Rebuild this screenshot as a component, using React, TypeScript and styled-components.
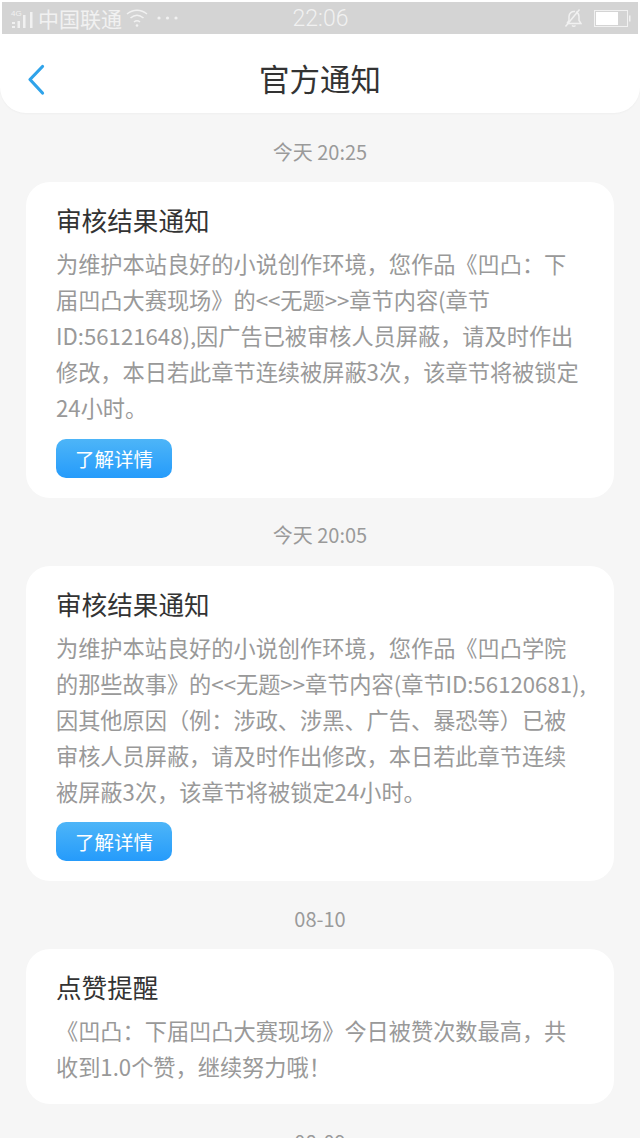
import { FC } from 'react'
import styled, { createGlobalStyle } from 'styled-components'

const GlobalStyle = createGlobalStyle`
  html, body {
    margin: 0;
    padding: 0;
    background-color: #f6f6f6;
  }
  body {
    font-family: "Noto Sans CJK SC", "Noto Sans", sans-serif;
  }
`

const Page = styled.div`
  width: 640px;
  height: 1138px;
  overflow: hidden;
  background-color: #f6f6f6;
`

const Header = styled.header`
  background-color: #ffffff;
  border-radius: 0 0 26px 26px;
  padding: 2px 2px 0;
  height: 113px;
  box-sizing: border-box;
  box-shadow: 0 1px 2px rgba(0, 0, 0, 0.03);
`

const StatusBar = styled.div`
  height: 32px;
  background-color: #d4d4d4;
  display: flex;
  align-items: center;
  color: #f1f1f1;
`

const StatusLeft = styled.div`
  display: flex;
  align-items: center;
  padding-left: 8px;
  flex: 1;
`

const Carrier = styled.span`
  font-size: 21px;
  line-height: 31px;
  margin-left: 2px;
  margin-right: 4px;
`

const DotsSlot = styled.span`
  display: flex;
  margin-left: 9px;
`

const StatusTime = styled.span`
  font-family: "Roboto", sans-serif;
  font-size: 23px;
  line-height: 31px;
  font-weight: 300;
  width: 60px;
  text-align: center;
`

const StatusRight = styled.div`
  flex: 1;
  display: flex;
  justify-content: flex-end;
  align-items: center;
  gap: 12px;
  padding-right: 7px;
`

const NavBar = styled.div`
  height: 79px;
  padding-top: 8px;
  box-sizing: border-box;
  display: flex;
  align-items: center;
  position: relative;
  justify-content: center;
`

const BackButton = styled.span`
  position: absolute;
  left: 22px;
  top: 30px;
  display: flex;
`

const NavTitle = styled.h1`
  margin: 0;
  font-size: 30.500px;
  font-weight: 400;
  color: #333333;
  line-height: 40px;
`

const Feed = styled.main`
  padding: 1px 26px 0;
`

const TimeLabel = styled.div`
  height: 68px;
  padding-top: 6px;
  box-sizing: border-box;
  display: flex;
  align-items: center;
  justify-content: center;
  font-size: 20px;
  color: #9a9a9a;
`

const Card = styled.article`
  background-color: #ffffff;
  border-radius: 24px;
  padding: 19px 30px 20px;
`

const CardTitle = styled.h2`
  margin: 0 0 6px;
  font-size: 25.600px;
  font-weight: 400;
  line-height: 38px;
  color: #333333;
`

const Body = styled.p`
  margin: 0;
  font-size: 22.200px;
  line-height: 36px;
  color: #999999;
`

const Line = styled.span`
  display: block;
  white-space: nowrap;
`

const DetailButton = styled.button`
  display: block;
  width: 116px;
  height: 39px;
  margin-top: 13.500px;
  padding: 0;
  border: none;
  border-radius: 10px;
  background: linear-gradient(#4db5f8, #259bfb);
  color: #ffffff;
  font-family: inherit;
  font-size: 19.500px;
  line-height: 39px;
`

type Notice = {
  time: string
  title: string
  lines: string[]
  action?: boolean
}

const notices: Notice[] = [
  {
    time: '今天 20:25',
    title: '审核结果通知',
    lines: [
      '为维护本站良好的小说创作环境，您作品《凹凸：下',
      '届凹凸大赛现场》的<<无题>>章节内容(章节',
      'ID:56121648),因广告已被审核人员屏蔽，请及时作出',
      '修改，本日若此章节连续被屏蔽3次，该章节将被锁定',
      '24小时。',
    ],
    action: true,
  },
  {
    time: '今天 20:05',
    title: '审核结果通知',
    lines: [
      '为维护本站良好的小说创作环境，您作品《凹凸学院',
      '的那些故事》的<<无题>>章节内容(章节ID:56120681),',
      '因其他原因（例：涉政、涉黑、广告、暴恐等）已被',
      '审核人员屏蔽，请及时作出修改，本日若此章节连续',
      '被屏蔽3次，该章节将被锁定24小时。',
    ],
    action: true,
  },
  {
    time: '08-10',
    title: '点赞提醒',
    lines: ['《凹凸：下届凹凸大赛现场》今日被赞次数最高，共', '收到1.0个赞，继续努力哦！'],
  },
]

const SignalIcon: FC = () => (
  <svg width="26" height="22" viewBox="0 0 26 22" fill="#f1f1f1">
    <text x="1" y="9" fontSize="8" fontFamily="Liberation Sans, sans-serif">4G</text>
    <rect x="2" y="15" width="3" height="2" />
    <rect x="2" y="19" width="3" height="2" />
    <rect x="7.500" y="14" width="2.500" height="7" />
    <rect x="13" y="8" width="2.500" height="13" />
    <rect x="20" y="5" width="2.500" height="16" />
  </svg>
)

const WifiIcon: FC = () => (
  <svg width="22" height="20" viewBox="0 0 22 20" fill="none" stroke="#f1f1f1" strokeWidth="1.600">
    <path d="M1 6c6-5 14-5 20 0" />
    <path d="M4.500 10c4-3.400 9-3.400 13 0" />
    <path d="M8 14c2-1.600 4-1.600 6 0" />
    <circle cx="11" cy="17.500" r="1.300" fill="#f1f1f1" stroke="none" />
  </svg>
)

const DotsIcon: FC = () => (
  <svg width="22" height="6" viewBox="0 0 22 6" fill="#f1f1f1">
    <circle cx="2" cy="3" r="1.600" />
    <circle cx="10.500" cy="3" r="1.600" />
    <circle cx="19" cy="3" r="1.600" />
  </svg>
)

const MutedBellIcon: FC = () => (
  <svg width="18" height="18" viewBox="0 0 18 18" fill="none" stroke="#f1f1f1" strokeWidth="1.500">
    <path d="M3 14.500h14l-2-3V7.500a5 5 0 0 0-3-4.500" />
    <path d="M11 2.500a5 5 0 0 0-6 5v4l-2 3" />
    <path d="M8 16.500c1 .8 2.500 .8 3.500 0" />
    <path d="M1.500 17.500 15.500 0.500" />
  </svg>
)

const BatteryIcon: FC = () => (
  <svg width="37" height="17" viewBox="0 0 37 17">
    <rect x="0.500" y="0.500" width="33" height="16" fill="none" stroke="#f1f1f1" />
    <rect x="2" y="2" width="22" height="13" fill="#ffffff" />
    <rect x="35" y="5.500" width="1.500" height="6" fill="#f1f1f1" />
  </svg>
)

const App: FC = () => {
  return (
    <Page>
      <GlobalStyle />
      <Header>
        <StatusBar>
          <StatusLeft>
            <SignalIcon />
            <Carrier>中国联通</Carrier>
            <WifiIcon />
            <DotsSlot>
              <DotsIcon />
            </DotsSlot>
          </StatusLeft>
          <StatusTime>22:06</StatusTime>
          <StatusRight>
            <MutedBellIcon />
            <BatteryIcon />
          </StatusRight>
        </StatusBar>
        <NavBar>
          <BackButton>
            <svg width="22" height="32" viewBox="0 0 22 32" fill="none" stroke="#2fa3ea" strokeWidth="3.200" strokeLinecap="round" strokeLinejoin="round">
              <path d="M18.500 2.500 6 15.500 18.500 29" />
            </svg>
          </BackButton>
          <NavTitle>官方通知</NavTitle>
        </NavBar>
      </Header>
      <Feed>
        {notices.map((notice) => (
          <section key={notice.time}>
            <TimeLabel>{notice.time}</TimeLabel>
            <Card>
              <CardTitle>{notice.title}</CardTitle>
              <Body>
                {notice.lines.map((line) => (
                  <Line key={line}>{line}</Line>
                ))}
              </Body>
              {notice.action && <DetailButton>了解详情</DetailButton>}
            </Card>
          </section>
        ))}
        <TimeLabel>08-09</TimeLabel>
      </Feed>
    </Page>
  )
}

export default App
